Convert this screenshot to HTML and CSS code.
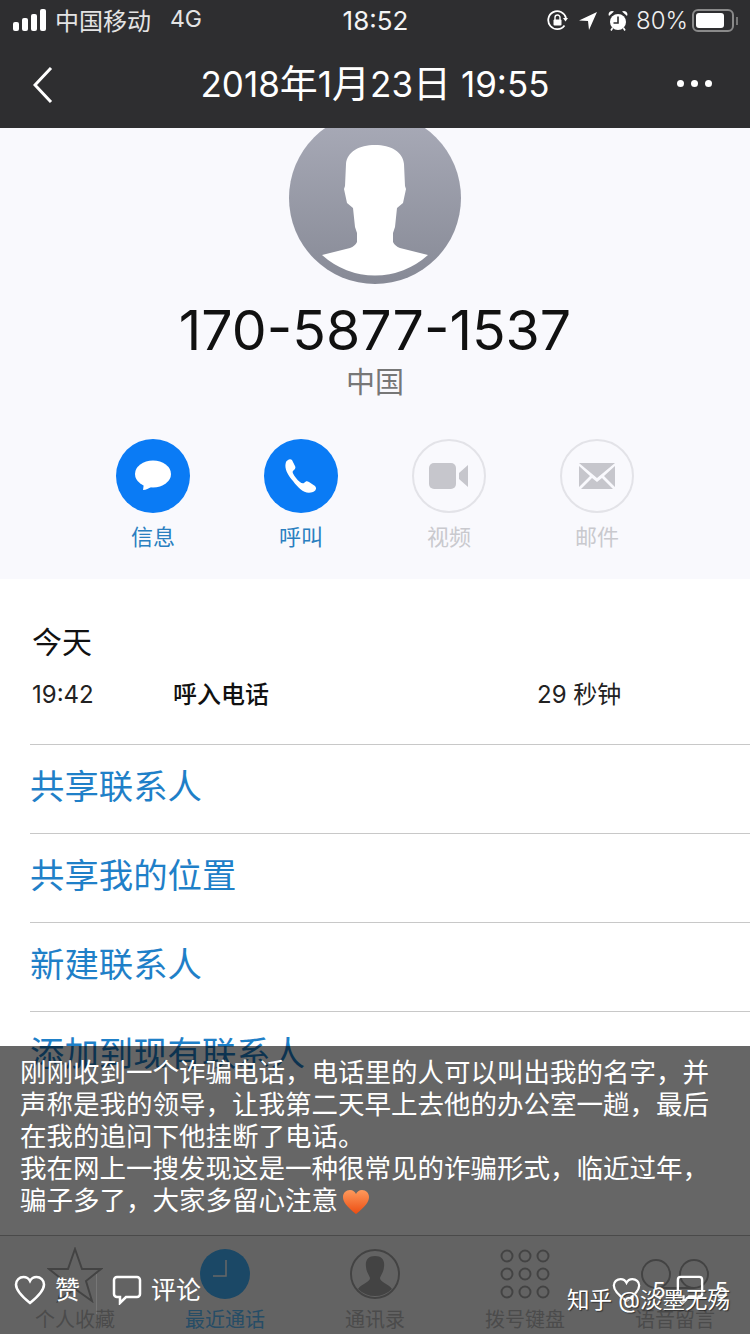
FILE: index.html
```html
<!DOCTYPE html>
<html lang="zh-CN">
<head>
    <meta charset="UTF-8">
    <meta name="viewport" content="width=device-width, initial-scale=1.0">
    <title>通话详情</title>
    <link rel="stylesheet" href="styles.css">
</head>
<body>
    <div class="phone">
        <header class="topbar">
            <div class="status">
                <div class="status-left">
                    <svg class="signal" width="34" height="22" viewBox="0 0 34 22"><rect x="0" y="13" width="6" height="9" rx="2"/><rect x="9" y="9" width="6" height="13" rx="2"/><rect x="18" y="5" width="6" height="17" rx="2"/><rect x="27" y="0" width="6" height="22" rx="2"/></svg>
                    <span class="carrier">中国移动</span>
                    <span class="net">4G</span>
                </div>
                <div class="clock">18:52</div>
                <div class="status-right">
                    <svg width="21" height="21" viewBox="0 0 21 21"><path d="M17.500 15.500A9 9 0 1 1 19 8" fill="none" stroke="#fff" stroke-width="1.800"/><path d="M16 8h5l-2.500 3.500z" fill="#fff"/><rect x="6.500" y="9.500" width="8" height="6" rx="1" fill="#fff"/><path d="M8 10V7.500a2.500 2.500 0 0 1 5 0V10" fill="none" stroke="#fff" stroke-width="1.400"/></svg>
                    <svg width="18" height="18" viewBox="0 0 18 18"><path d="M18 0L0 8.500l9 .6L10 18z" fill="#fff"/></svg>
                    <svg width="20" height="21" viewBox="0 0 20 21"><circle cx="10" cy="12" r="8" fill="#fff"/><path d="M10 6.500V13H5.500" fill="none" stroke="#2e2e30" stroke-width="1.600"/><path d="M1 6a3.500 3.500 0 0 1 5-4.500zM19 6a3.500 3.500 0 0 0-5-4.500z" fill="#fff"/><path d="M4.500 18l-1.500 2.500M15.500 18l1.500 2.500" stroke="#fff" stroke-width="1.600"/></svg>
                    <span class="percent">80%</span>
                    <div class="battery"><div class="battery-fill"></div></div>
                    <div class="battery-nub"></div>
                </div>
            </div>
            <div class="navbar">
                <svg class="back" width="20" height="36" viewBox="0 0 20 36"><path d="M18 1L2 18l16 17" fill="none" stroke="#fff" stroke-width="3"/></svg>
                <div class="nav-title">2018<span class="cjk">年</span>1<span class="cjk">月</span>23<span class="cjk">日</span> 19:55</div>
                <div class="more"><i></i><i></i><i></i></div>
            </div>
        </header>

        <section class="hero">
            <svg class="avatar" width="172" height="172" viewBox="0 0 172 172">
                <defs><linearGradient id="avatarFill" x1="0" y1="0" x2="0" y2="1"><stop offset="0" stop-color="#a9abb8"/><stop offset="1" stop-color="#878a96"/></linearGradient></defs>
                <circle cx="86" cy="86" r="86" fill="url(#avatarFill)"/>
                <path d="M86 33C70 33 58 40 57 52L56 74L55 77L58 91L64 96L66 115L68 121L68 130Q66 134 61 136L33 143A79 79 0 0 0 139 143L111 136Q106 134 104 130L104 121L106 115L108 96L114 91L117 77L116 74L115 52C114 40 102 33 86 33Z" fill="#fff"/>
            </svg>
            <div class="number">170-5877-1537</div>
            <div class="region">中国</div>
            <div class="actions">
                <div class="action">
                    <div class="action-circle on">
                        <svg width="40" height="36" viewBox="0 0 40 36"><ellipse cx="20" cy="16" rx="18" ry="13.500" fill="#fff"/><path d="M11 25l-1 7c3 0 7-2 9-4z" fill="#fff"/></svg>
                    </div>
                    <span class="action-label">信息</span>
                </div>
                <div class="action">
                    <div class="action-circle on">
                        <svg width="36" height="36" viewBox="0 0 36 36"><path d="M3 4c1-2 4-4 6-2l3 6c1 2 0 3-2 5-1 1 0 3 3 7s6 6 8 5c2-2 3-2 5-1l6 4c2 2 1 5-2 6-8 3-14-3-20-11C4 16 1 10 3 4z" fill="#fff"/></svg>
                    </div>
                    <span class="action-label">呼叫</span>
                </div>
                <div class="action off">
                    <div class="action-circle">
                        <svg width="40" height="26" viewBox="0 0 40 26"><rect x="0" y="0" width="27" height="26" rx="5" fill="#c6c6cc"/><path d="M30 10L39 2v22l-9-8z" fill="#c6c6cc"/></svg>
                    </div>
                    <span class="action-label">视频</span>
                </div>
                <div class="action off">
                    <div class="action-circle">
                        <svg width="36" height="26" viewBox="0 0 36 26"><path d="M0 0h36L18 15zM0 3l11 10L0 24zM36 3L25 13l11 11zM13 15l5 4 5-4 11 11H2z" fill="#c6c6cc"/></svg>
                    </div>
                    <span class="action-label">邮件</span>
                </div>
            </div>
        </section>

        <section class="recent">
            <div class="day">今天</div>
            <div class="call">
                <span class="call-time">19:42</span>
                <span class="call-type">呼入电话</span>
                <span class="call-len">29 秒钟</span>
            </div>
        </section>

        <ul class="links">
            <li>共享联系人</li>
            <li>共享我的位置</li>
            <li>新建联系人</li>
            <li>添加到现有联系人</li>
        </ul>

        <nav class="tabs">
            <div class="tab">
                <svg class="tab-star" width="56" height="56" viewBox="0 0 56 56"><path d="M28 2l7 20h19L39 34l6 20-17-12-17 12 6-20L2 22h19z" fill="none" stroke="#a8a8a8" stroke-width="2"/></svg>
                <span>个人收藏</span>
            </div>
            <div class="tab active">
                <svg width="50" height="50" viewBox="0 0 50 50"><circle cx="25" cy="25" r="25" fill="#44b4ff"/><path d="M26 11v16H13" fill="none" stroke="#fff" stroke-width="1.500"/></svg>
                <span>最近通话</span>
            </div>
            <div class="tab">
                <svg width="50" height="50" viewBox="0 0 50 50"><circle cx="25" cy="25" r="24" fill="none" stroke="#a8a8a8" stroke-width="2"/><path d="M25 7c-7 0-10 4-9 11 0 4 3 8 4 11 0 4-9 6-12 11a24 24 0 0 0 34 0c-3-5-12-7-12-11 1-3 4-7 4-11 1-7-2-11-9-11z" fill="#a8a8a8"/></svg>
                <span>通讯录</span>
            </div>
            <div class="tab">
                <svg width="50" height="50" viewBox="0 0 50 50" fill="none" stroke="#a8a8a8" stroke-width="2"><circle cx="7" cy="7" r="5.500"/><circle cx="25" cy="7" r="5.500"/><circle cx="43" cy="7" r="5.500"/><circle cx="7" cy="25" r="5.500"/><circle cx="25" cy="25" r="5.500"/><circle cx="43" cy="25" r="5.500"/><circle cx="7" cy="43" r="5.500"/><circle cx="25" cy="43" r="5.500"/><circle cx="43" cy="43" r="5.500"/></svg>
                <span>拨号键盘</span>
            </div>
            <div class="tab">
                <svg width="70" height="50" viewBox="0 0 70 50" fill="none" stroke="#a8a8a8" stroke-width="2"><circle cx="16" cy="25" r="14"/><circle cx="54" cy="25" r="14"/><path d="M16 39h38"/></svg>
                <span>语音留言</span>
            </div>
        </nav>

        <aside class="caption">
            <p class="caption-text">刚刚收到一个诈骗电话，电话里的人可以叫出我的名字，并声称是我的领导，让我第二天早上去他的办公室一趟，最后在我的追问下他挂断了电话。<br>我在网上一搜发现这是一种很常见的诈骗形式，临近过年，骗子多了，大家多留心注意<svg class="heart" width="28" height="28" viewBox="0 0 28 28"><defs><linearGradient id="heartFill" x1="0" y1="0" x2="0" y2="1"><stop offset="0" stop-color="#ff9a5c"/><stop offset="1" stop-color="#ec4d12"/></linearGradient></defs><path d="M14 26C5 19 1 14 1 9c0-4 3-7 7-7 3 0 5 2 6 4 1-2 3-4 6-4 4 0 7 3 7 7 0 5-4 10-13 17z" fill="url(#heartFill)"/></svg></p>
            <div class="caption-bar">
                <div class="bar-group">
                    <svg width="32" height="30" viewBox="0 0 32 30"><path d="M16 28C6 20 2 15 2 9.500 2 5 5.500 2 9.500 2 12.500 2 15 4 16 6c1-2 3.500-4 6.500-4C26.500 2 30 5 30 9.500 30 15 26 20 16 28z" fill="none" stroke="#fff" stroke-width="2.500"/></svg>
                    <span class="bar-text like">赞</span>
                    <div class="bar-sep"></div>
                    <svg class="bar-comment" width="30" height="30" viewBox="0 0 30 30"><path d="M5 2h20a3 3 0 0 1 3 3v14a3 3 0 0 1-3 3H14l-6 6v-6H5a3 3 0 0 1-3-3V5a3 3 0 0 1 3-3z" fill="none" stroke="#fff" stroke-width="2.500"/></svg>
                    <span class="bar-text">评论</span>
                </div>
                <div class="bar-group bar-counts">
                    <svg width="29" height="26" viewBox="0 0 32 28"><path d="M16 26C6 19 2 14 2 9 2 5 5.500 2 9.500 2 12.500 2 15 4 16 6c1-2 3.500-4 6.500-4C26.500 2 30 5 30 9 30 14 26 19 16 26z" fill="none" stroke="#fff" stroke-width="2.500"/></svg>
                    <span class="bar-text count">5</span>
                    <svg class="bar-box" width="28" height="30" viewBox="0 0 30 32"><path d="M5 2h20a3 3 0 0 1 3 3v15a3 3 0 0 1-3 3H14l-6 6v-6H5a3 3 0 0 1-3-3V5a3 3 0 0 1 3-3z" fill="none" stroke="#fff" stroke-width="2.500"/></svg>
                    <span class="bar-text count">5</span>
                </div>
            </div>
            <div class="watermark">知乎 @淡墨无殇</div>
        </aside>
    </div>
</body>
</html>
```

FILE: styles.css
```css
* {
    box-sizing: border-box;
}
body {
    margin: 0;
    background-color: #fff;
    font-family: 'Inter', 'Noto Sans CJK SC', sans-serif;
}
.phone {
    position: relative;
    display: flex;
    flex-direction: column;
    width: 750px;
    height: 1334px;
    overflow: hidden;
    background-color: #fff;
}

/* top bar */
.topbar {
    position: relative;
    z-index: 1;
    height: 128px;
    flex-shrink: 0;
    background-color: #2e2e30;
    color: #fff;
}
.status {
    display: flex;
    justify-content: space-between;
    align-items: center;
    height: 38px;
    padding: 0 12px 0 13px;
}
.status-left {
    display: flex;
    align-items: center;
    width: 260px;
    color: #e4e4e4;
    font-size: 24px;
}
.signal {
    fill: #fff;
    margin: 2px 8px 0 0;
}
.net {
    margin-left: 19px;
    font-size: 23px;
}
.clock {
    margin-top: 2px;
    font-size: 26px;
    color: #f4f4f4;
}
.status-right {
    display: flex;
    align-items: center;
    justify-content: flex-end;
    width: 260px;
    margin-top: 3px;
    gap: 11px;
}
.percent {
    margin-left: -3px;
    font-size: 24px;
    font-weight: 300;
    color: #f0f0f0;
}
.battery {
    width: 42px;
    height: 23px;
    margin-left: -7px;
    padding: 2px;
    border: 2px solid #8a8a8a;
    border-radius: 6px;
}
.battery-fill {
    width: 28px;
    height: 100%;
    background-color: #fff;
    border-radius: 3px;
}
.battery-nub {
    width: 2px;
    height: 8px;
    margin-left: -9px;
    background-color: #777;
}
.navbar {
    position: relative;
    display: flex;
    align-items: center;
    justify-content: center;
    height: 90px;
    padding-bottom: 6px;
}
.back {
    position: absolute;
    left: 33px;
    top: 29px;
}
.nav-title {
    font-size: 35px;
}
.nav-title .cjk {
    font-size: 38px;
}
.more {
    position: absolute;
    right: 38px;
    top: 42px;
    display: flex;
    gap: 7px;
}
.more i {
    width: 7px;
    height: 7px;
    border-radius: 50%;
    background-color: #fff;
}

/* contact */
.hero {
    display: flex;
    flex-direction: column;
    align-items: center;
    height: 451px;
    flex-shrink: 0;
    background-color: #f9f9fd;
}
.avatar {
    margin-top: -16px;
    flex-shrink: 0;
}
.number {
    margin-top: 13px;
    font-size: 55.400px;
    line-height: 66px;
    font-weight: 400;
    color: #111;
}
.region {
    font-size: 29px;
    line-height: 40px;
    color: #777;
}
.actions {
    display: flex;
    margin-top: 36px;
}
.action {
    display: flex;
    flex-direction: column;
    align-items: center;
    width: 148px;
}
.action-circle {
    display: flex;
    align-items: center;
    justify-content: center;
    width: 74px;
    height: 74px;
    border: 2px solid #e3e3e8;
    border-radius: 50%;
}
.action-circle.on {
    border: none;
    background-color: #0a7bf5;
}
.action-label {
    margin-top: 8px;
    font-size: 22px;
    line-height: 32px;
    color: #2a7fc0;
}
.off .action-label {
    color: #c9c9ce;
}

/* call log */
.recent {
    height: 165px;
    flex-shrink: 0;
    padding: 42px 32px 0;
}
.day {
    font-size: 30px;
    line-height: 42px;
    color: #111;
}
.call {
    display: flex;
    align-items: center;
    margin-top: 14px;
    font-size: 24px;
    line-height: 36px;
    color: #222;
}
.call-time {
    width: 141px;
}
.call-type {
    width: 364px;
    font-weight: 500;
    color: #111;
}
.links {
    flex: 1;
    margin: 0;
    padding: 0;
    list-style: none;
}
.links li {
    height: 89px;
    margin-left: 30px;
    border-top: 1px solid #c8c8c8;
    font-size: 34.400px;
    line-height: 84px;
    color: #1f80c8;
}

/* tab bar */
.tabs {
    display: flex;
    height: 99px;
    flex-shrink: 0;
    border-top: 1px solid #b8b8b8;
    background-color: #f8f8f8;
}
.tab {
    display: flex;
    flex: 1;
    flex-direction: column;
    align-items: center;
    justify-content: flex-end;
    padding-bottom: 1px;
    font-size: 20px;
    line-height: 26px;
    color: #bcbcbc;
}
.tab svg {
    margin-bottom: 8px;
}
.tab .tab-star {
    margin-bottom: 4px;
}
.tab.active {
    color: #60c0ff;
}

/* caption over the screenshot */
.caption {
    position: absolute;
    z-index: 2;
    left: 0;
    right: 0;
    top: 1046px;
    bottom: 0;
    display: flex;
    flex-direction: column;
    padding: 10px 20px 0;
    background-color: rgba(0, 0, 0, 0.6);
    color: #fff;
}
.caption-text {
    margin: 0;
    font-size: 26.500px;
    line-height: 32px;
}
.heart {
    margin-left: 4px;
    vertical-align: -6px;
}
.caption-bar {
    display: flex;
    justify-content: space-between;
    align-items: center;
    margin-top: 50px;
    margin-left: -6px;
    margin-right: 2px;
}
.bar-group {
    display: flex;
    align-items: center;
}
.bar-text {
    margin-left: 9px;
    font-size: 25px;
    line-height: 30px;
}
.bar-sep {
    width: 1px;
    height: 40px;
    margin: 8px 0 0 16px;
    background-color: rgba(255, 255, 255, 0.12);
}
.bar-comment {
    margin-left: 15px;
}
.count {
    margin-left: 11px;
    font-size: 22px;
}
.bar-box {
    margin-left: 10px;
}
.watermark {
    position: absolute;
    right: 20px;
    top: 238px;
    font-size: 22.500px;
    line-height: 32px;
    text-shadow: 1px 1px 1px rgba(0, 0, 0, 0.5);
}
```
